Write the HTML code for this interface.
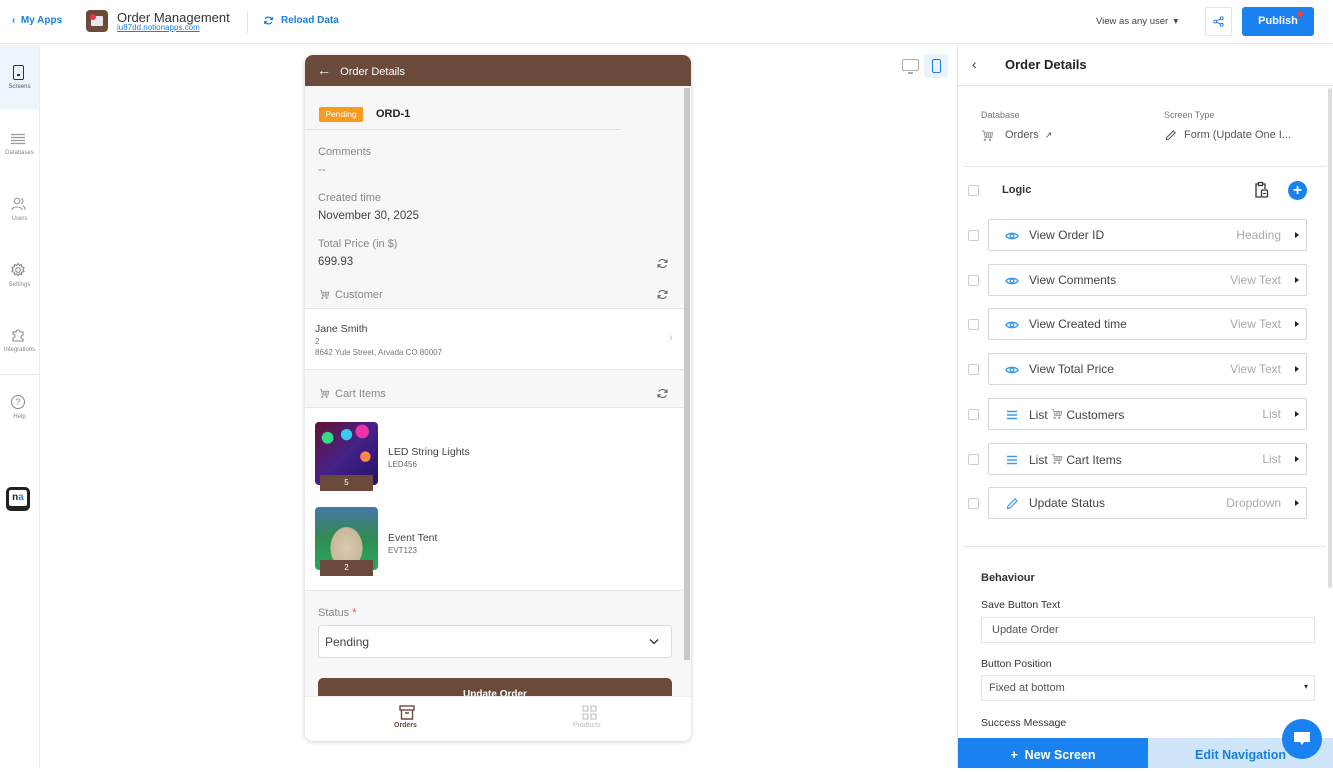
<!DOCTYPE html>
<html><head><meta charset="utf-8">
<style>
*{box-sizing:border-box;margin:0;padding:0}
body{width:1333px;height:768px;overflow:hidden;background:#fff;font-family:"Liberation Sans",sans-serif;color:#333;position:relative}
.a{position:absolute}
.t{white-space:nowrap}
.blue{color:#1a7fe0}
.side .it{position:absolute;left:0;width:39px;text-align:center;font-size:6px;color:#888}
.row{position:absolute;left:988px;width:319px;height:32px;border:1px solid #d6d6d6;border-radius:2px;background:#fff}
.row .n{position:absolute;left:40px;top:8px;font-size:12px;color:#444}
.row .k{position:absolute;right:25px;top:8px;font-size:12px;color:#aaa}
.row .ar{position:absolute;right:7px;top:12px;width:0;height:0;border-left:4px solid #222;border-top:3px solid transparent;border-bottom:3px solid transparent}
.row svg{position:absolute;left:16px;top:9px}
.cb{position:absolute;left:968px;width:11px;height:11px;border:1px solid #ccc;border-radius:2px;background:#fff}
.lbl{font-size:11px;color:#888}
.val{font-size:11.5px;color:#444}
</style></head><body>
<svg width="0" height="0" style="position:absolute">
<defs>
<symbol id="eye" viewBox="0 0 14 14"><path d="M1 7C3 3.5 11 3.5 13 7C11 10.5 3 10.5 1 7Z" fill="none" stroke="#3a9be8" stroke-width="1.4"/><circle cx="7" cy="7" r="1.8" fill="none" stroke="#3a9be8" stroke-width="1.4"/></symbol>
<symbol id="lst" viewBox="0 0 14 14"><path d="M2 3.5H12M2 7H12M2 10.5H12" stroke="#3a9be8" stroke-width="1.5"/></symbol>
<symbol id="pen" viewBox="0 0 14 14"><path d="M2.5 11.5L3 9L10 2L12 4L5 11Z" fill="none" stroke="#3a9be8" stroke-width="1.2"/></symbol>
<symbol id="ref" viewBox="0 0 14 14"><path d="M11.5 5.5A5 5 0 0 0 2.8 5M2.5 8.5A5 5 0 0 0 11.2 9" fill="none" stroke="#666" stroke-width="1.2"/><path d="M11.8 2.5V5.7H8.8M2.2 11.5V8.3H5.2" fill="none" stroke="#666" stroke-width="1.2"/></symbol>
<symbol id="cart" viewBox="0 0 14 14"><path d="M1 2H3L4.5 9H11.5L12.5 4H3.5M5 11.5A.8.8 0 1 0 5 11.6M10.5 11.5A.8.8 0 1 0 10.5 11.6M6 4.5V8.5M8 4.5V8.5M10 4.5V8.5" fill="none" stroke="#999" stroke-width="1.1"/></symbol>
</defs></svg>
<!-- top bar -->
<div class="a" style="left:0;top:0;width:1333px;height:44px;border-bottom:1px solid #e6e6e6"></div>
<div class="a t blue" style="left:12px;top:15px;font-size:10px;font-weight:bold">&#8249;&nbsp; My Apps</div>
<div class="a" style="left:86px;top:10px;width:22px;height:22px;border-radius:4px;background:#6b4a3c"><div style="margin:6px 5px;width:12px;height:10px;background:#e6e6e6;border-radius:1px"></div><div class="a" style="left:4px;top:4px;width:6px;height:6px;border-radius:50%;background:#e34"></div></div>
<div class="a t" style="left:117px;top:10px;font-size:13px;color:#333">Order Management</div>
<div class="a t blue" style="left:117px;top:23px;font-size:8px;text-decoration:underline">iu87dd.notionapps.com</div>
<div class="a" style="left:247px;top:11px;width:1px;height:22px;background:#e3e3e3"></div>
<svg class="a" style="left:263px;top:15px" width="11" height="11" viewBox="0 0 14 14"><path d="M11.5 5.5A5 5 0 0 0 2.8 5M2.5 8.5A5 5 0 0 0 11.2 9" fill="none" stroke="#1a7fe0" stroke-width="1.6"/><path d="M11.8 2.5V5.7H8.8M2.2 11.5V8.3H5.2" fill="none" stroke="#1a7fe0" stroke-width="1.6"/></svg>
<div class="a t blue" style="left:281px;top:15px;font-size:10px;font-weight:bold">Reload Data</div>
<div class="a t" style="left:1096px;top:16px;font-size:9.5px;color:#444">View as any user &nbsp;&#9662;</div>
<div class="a" style="left:1205px;top:7px;width:27px;height:29px;border:1px solid #e3e3e3;border-radius:2px"><svg style="margin:8px 7px" width="11" height="11" viewBox="0 0 12 12"><circle cx="9.5" cy="2.5" r="1.6" fill="none" stroke="#1a7fe0"/><circle cx="2.5" cy="6" r="1.6" fill="none" stroke="#1a7fe0"/><circle cx="9.5" cy="9.5" r="1.6" fill="none" stroke="#1a7fe0"/><path d="M4 5.2L8 3.2M4 6.8L8 8.8" stroke="#1a7fe0"/></svg></div>
<div class="a" style="left:1242px;top:7px;width:72px;height:29px;background:#1a82f0;border-radius:3px;color:#fff;font-size:11px;font-weight:bold;text-align:center;line-height:29px">Publish</div>
<div class="a" style="left:1297px;top:11px;width:6px;height:6px;border-radius:50%;background:#e44"></div>

<!-- sidebar -->
<div class="a side" style="left:0;top:45px;width:40px;height:723px;border-right:1px solid #eee">
 <div class="a" style="left:0;top:0;width:39px;height:65px;background:#eef5fc"></div>
 <div class="a" style="left:13px;top:20px;width:11px;height:15px;border:1.5px solid #333;border-radius:2px"><div style="margin:8px auto 0;width:3px;height:1.5px;background:#333"></div></div>
 <div class="it" style="top:39px;color:#555">Screens</div>
 <svg class="a" style="left:11px;top:88px" width="14" height="12" viewBox="0 0 14 12"><path d="M0 1.5H14M0 4.5H14M0 7.5H14M0 10.5H14" stroke="#999" stroke-width="1.2"/></svg>
 <div class="it" style="top:105px">Databases</div>
 <svg class="a" style="left:11px;top:152px" width="15" height="14" viewBox="0 0 15 14"><circle cx="6" cy="4" r="2.8" fill="none" stroke="#999" stroke-width="1.1"/><path d="M1 13C1 9 11 9 11 13M10 1.5A2.6 2.6 0 0 1 10 6.5M12 9C14 10 14 11 14 13" fill="none" stroke="#999" stroke-width="1.1"/></svg>
 <div class="it" style="top:171px">Users</div>
 <svg class="a" style="left:10px;top:217px" width="16" height="16" viewBox="0 0 16 16"><circle cx="8" cy="8" r="2.3" fill="none" stroke="#888" stroke-width="1.1"/><path d="M8 1.5L9.3 3.3L11.5 2.6L11.8 4.8L14 5.5L12.9 7.5L14 9.5L11.8 10.3L11.5 12.5L9.3 11.8L8 13.8L6.7 11.8L4.5 12.5L4.2 10.3L2 9.5L3.1 7.5L2 5.5L4.2 4.8L4.5 2.6L6.7 3.3Z" fill="none" stroke="#888" stroke-width="1.1"/></svg>
 <div class="it" style="top:237px">Settings</div>
 <svg class="a" style="left:10px;top:282px" width="16" height="16" viewBox="0 0 16 16"><path d="M3 5H6A2 2 0 1 1 10 5H13V8A2 2 0 1 0 13 12V14H3V11A2 2 0 1 0 3 7Z" fill="none" stroke="#888" stroke-width="1.1"/></svg>
 <div class="it" style="top:302px">Integrations</div>
 <div class="a" style="left:0;top:329px;width:39px;height:1px;background:#e6e6e6"></div>
 <div class="a" style="left:11px;top:350px;width:14px;height:14px;border:1.3px solid #888;border-radius:50%;font-size:9px;text-align:center;line-height:12px;color:#888">?</div>
 <div class="it" style="top:369px">Help</div>
 <div class="a" style="left:6px;top:442px;width:24px;height:24px;border-radius:5px;background:#222;padding:3px"><div style="background:#fff;width:18px;height:16px;border-radius:2px;font-size:10px;font-weight:bold;line-height:16px;text-align:center;color:#222">n<span style="color:#1a82f0">a</span></div></div>
</div>

<!-- device toggle -->
<div class="a" style="left:902px;top:59px;width:17px;height:12px;border:1.3px solid #aaa;border-radius:2px"></div>
<div class="a" style="left:908px;top:72px;width:5px;height:2px;background:#aaa"></div>
<div class="a" style="left:924px;top:54px;width:24px;height:24px;background:#eaf3fc;border-radius:3px"><div style="margin:5px 8px;width:9px;height:14px;border:1.3px solid #1a7fe0;border-radius:2px"></div></div>

<!-- phone -->
<div class="a" style="left:305px;top:55px;width:386px;height:686px;border-radius:8px;background:#f7f7f7;box-shadow:0 1px 5px rgba(0,0,0,.2);overflow:hidden">
 <div class="a" style="left:0;top:0;width:386px;height:31px;background:#6b4a3c;color:#fff;font-size:11px;line-height:31px;padding-left:12px"><span style="font-size:14px">&#8592;</span>&nbsp;&nbsp; Order Details</div>
 <div class="a" style="left:379px;top:33px;width:6px;height:572px;background:#c8c8c8"></div>
 <div class="a" style="left:14px;top:52px;width:44px;height:15px;background:#f79a1e;border-radius:2px;color:#fff;font-size:8.5px;text-align:center;line-height:15px">Pending</div>
 <div class="a t" style="left:71px;top:53px;font-size:11px;font-weight:bold;color:#222">ORD-1</div>
 <div class="a" style="left:0;top:74px;width:316px;height:1px;background:#e3e3e3"></div>
 <div class="a t lbl" style="left:13px;top:91px">Comments</div>
 <div class="a t val" style="left:13px;top:109px;color:#888">--</div>
 <div class="a t lbl" style="left:13px;top:137px">Created time</div>
 <div class="a t val" style="left:13px;top:155px">November 30, 2025</div>
 <div class="a t lbl" style="left:13px;top:183px">Total Price (in $)</div>
 <div class="a t val" style="left:13px;top:201px">699.93</div>
 <svg class="a" style="left:351px;top:202px" width="13" height="13"><use href="#ref"/></svg>
 <svg class="a" style="left:14px;top:234px" width="11" height="11"><use href="#cart"/></svg>
 <div class="a t lbl" style="left:30px;top:234px">Customer</div>
 <svg class="a" style="left:351px;top:233px" width="13" height="13"><use href="#ref"/></svg>
 <div class="a" style="left:0;top:253px;width:379px;height:62px;background:#fff;border-top:1px solid #e6e6e6;border-bottom:1px solid #e6e6e6">
  <div class="a t" style="left:10px;top:14px;font-size:10.5px;color:#444">Jane Smith</div>
  <div class="a t" style="left:10px;top:28px;font-size:8px;color:#777">2</div>
  <div class="a t" style="left:10px;top:39px;font-size:8px;color:#777">8642 Yule Street, Arvada CO 80007</div>
  <div class="a" style="left:364px;top:23px;font-size:11px;color:#bbb">&#8250;</div>
 </div>
 <svg class="a" style="left:14px;top:333px" width="11" height="11"><use href="#cart"/></svg>
 <div class="a t lbl" style="left:30px;top:333px">Cart Items</div>
 <svg class="a" style="left:351px;top:332px" width="13" height="13"><use href="#ref"/></svg>
 <div class="a" style="left:0;top:352px;width:379px;height:184px;background:#fff;border-top:1px solid #e6e6e6;border-bottom:1px solid #e6e6e6">
  <div class="a" style="left:10px;top:14px;width:63px;height:63px;border-radius:4px;background:radial-gradient(circle at 20% 25%,#3d8 0,#3d8 8%,transparent 9%),radial-gradient(circle at 50% 20%,#3ce 0,#3ce 9%,transparent 10%),radial-gradient(circle at 75% 15%,#e3a 0,#e3a 9%,transparent 10%),radial-gradient(circle at 80% 55%,#f84 0,#f84 8%,transparent 9%),linear-gradient(135deg,#613 0,#428 50%,#216 100%)"></div>
  <div class="a" style="left:15px;top:67px;width:53px;height:16px;background:#6b4a3c;color:#fff;font-size:8px;text-align:center;line-height:16px">5</div>
  <div class="a t" style="left:83px;top:38px;font-size:10.5px;color:#444">LED String Lights</div>
  <div class="a t" style="left:83px;top:52px;font-size:8px;color:#666">LED456</div>
  <div class="a" style="left:10px;top:99px;width:63px;height:63px;border-radius:4px;background:radial-gradient(ellipse at 50% 65%,#d8c9b0 0,#c9b89a 35%,transparent 37%),linear-gradient(180deg,#47a 0,#385 45%,#2a5 100%)"></div>
  <div class="a" style="left:15px;top:152px;width:53px;height:16px;background:#6b4a3c;color:#fff;font-size:8px;text-align:center;line-height:16px">2</div>
  <div class="a t" style="left:83px;top:124px;font-size:10.5px;color:#444">Event Tent</div>
  <div class="a t" style="left:83px;top:138px;font-size:8px;color:#666">EVT123</div>
 </div>
 <div class="a t lbl" style="left:13px;top:552px">Status <span style="color:#e55">*</span></div>
 <div class="a" style="left:13px;top:570px;width:354px;height:33px;border:1px solid #ddd;border-radius:4px;background:#fff;font-size:12px;color:#444;padding:9px 0 0 6px">Pending<svg class="a" style="right:12px;top:12px" width="10" height="7" viewBox="0 0 10 7"><path d="M1 1.5L5 5.5L9 1.5" fill="none" stroke="#333" stroke-width="1.3"/></svg></div>
 <div class="a" style="left:13px;top:623px;width:354px;height:24px;background:#6b4a3c;border-radius:5px;color:#fff;font-size:10px;font-weight:bold;text-align:center;padding-top:11px">Update Order</div>
 <div class="a" style="left:0;top:641px;width:386px;height:45px;background:#fff;border-top:1px solid #eee">
  <svg class="a" style="left:94px;top:8px" width="16" height="15" viewBox="0 0 16 15"><rect x="1" y="1" width="14" height="4" fill="none" stroke="#6b4a3c" stroke-width="1.4"/><path d="M2.5 5V14H13.5V5M6 8H10" fill="none" stroke="#6b4a3c" stroke-width="1.4"/></svg>
  <div class="a t" style="left:89px;top:25px;font-size:7px;color:#6b4a3c;font-weight:bold">Orders</div>
  <svg class="a" style="left:277px;top:8px" width="15" height="15" viewBox="0 0 15 15"><rect x="1" y="1" width="5" height="5" fill="none" stroke="#bbb"/><rect x="9" y="1" width="5" height="5" fill="none" stroke="#bbb"/><rect x="1" y="9" width="5" height="5" fill="none" stroke="#bbb"/><rect x="9" y="9" width="5" height="5" fill="none" stroke="#bbb"/></svg>
  <div class="a t" style="left:268px;top:25px;font-size:7px;color:#bbb">Products</div>
 </div>
</div>

<!-- right panel -->
<div class="a" style="left:957px;top:45px;width:376px;height:723px;border-left:1px solid #e6e6e6"></div>
<div class="a" style="left:1328px;top:88px;width:4px;height:500px;background:#ddd;border-radius:2px"></div>
<div class="a t" style="left:972px;top:56px;font-size:14px;color:#333">&#8249;</div>
<div class="a t" style="left:1005px;top:57px;font-size:13px;font-weight:bold;color:#222">Order Details</div>
<div class="a" style="left:958px;top:85px;width:375px;height:1px;background:#e6e6e6"></div>
<div class="a t" style="left:981px;top:110px;font-size:9px;color:#777">Database</div>
<svg class="a" style="left:981px;top:129px" width="13" height="13"><use href="#cart"/></svg>
<div class="a t" style="left:1005px;top:129px;font-size:11px;color:#555">Orders &nbsp;<span style="font-size:9px">&#x2197;</span></div>
<div class="a t" style="left:1164px;top:110px;font-size:9px;color:#777">Screen Type</div>
<svg class="a" style="left:1164px;top:129px" width="13" height="13" viewBox="0 0 14 14"><path d="M2.5 11.5L3 9L10 2L12 4L5 11Z" fill="none" stroke="#555" stroke-width="1.1"/></svg>
<div class="a t" style="left:1184px;top:129px;font-size:11px;color:#555">Form (Update One I...</div>
<div class="a" style="left:964px;top:166px;width:362px;height:1px;background:#e6e6e6"></div>
<div class="cb" style="top:185px"></div>
<div class="a t" style="left:1002px;top:184px;font-size:11px;font-weight:bold;color:#333">Logic</div>
<svg class="a" style="left:1254px;top:181px" width="15" height="18" viewBox="0 0 15 18"><path d="M4 3H2V16H7M9 3H11V8" fill="none" stroke="#333" stroke-width="1.3"/><rect x="4.5" y="1.5" width="4" height="3" fill="none" stroke="#333" stroke-width="1.2"/><rect x="7.5" y="9" width="6" height="7" rx="1" fill="none" stroke="#333" stroke-width="1.3"/><path d="M9 12.5H12" stroke="#333"/></svg>
<div class="a" style="left:1288px;top:181px;width:19px;height:19px;border-radius:50%;background:#1a82f0;color:#fff;text-align:center;font-size:16px;line-height:19px;font-weight:bold">+</div>

<div class="cb" style="top:230px"></div>
<div class="row" style="top:219px"><svg width="14" height="14"><use href="#eye"/></svg><span class="n">View Order ID</span><span class="k">Heading</span><span class="ar"></span></div>
<div class="cb" style="top:275px"></div>
<div class="row" style="top:264px"><svg width="14" height="14"><use href="#eye"/></svg><span class="n">View Comments</span><span class="k">View Text</span><span class="ar"></span></div>
<div class="cb" style="top:319px"></div>
<div class="row" style="top:308px"><svg width="14" height="14"><use href="#eye"/></svg><span class="n">View Created time</span><span class="k">View Text</span><span class="ar"></span></div>
<div class="cb" style="top:364px"></div>
<div class="row" style="top:353px"><svg width="14" height="14"><use href="#eye"/></svg><span class="n">View Total Price</span><span class="k">View Text</span><span class="ar"></span></div>
<div class="cb" style="top:409px"></div>
<div class="row" style="top:398px"><svg width="14" height="14"><use href="#lst"/></svg><span class="n">List <svg style="position:relative;left:0;top:1px" width="12" height="12"><use href="#cart"/></svg> Customers</span><span class="k">List</span><span class="ar"></span></div>
<div class="cb" style="top:454px"></div>
<div class="row" style="top:443px"><svg width="14" height="14"><use href="#lst"/></svg><span class="n">List <svg style="position:relative;left:0;top:1px" width="12" height="12"><use href="#cart"/></svg> Cart Items</span><span class="k">List</span><span class="ar"></span></div>
<div class="cb" style="top:498px"></div>
<div class="row" style="top:487px"><svg width="14" height="14"><use href="#pen"/></svg><span class="n">Update Status</span><span class="k">Dropdown</span><span class="ar"></span></div>

<div class="a" style="left:964px;top:546px;width:362px;height:1px;background:#e6e6e6"></div>
<div class="a t" style="left:981px;top:572px;font-size:11px;font-weight:bold;color:#333">Behaviour</div>
<div class="a t" style="left:981px;top:599px;font-size:10.5px;color:#333">Save Button Text</div>
<div class="a" style="left:981px;top:617px;width:334px;height:26px;border:1px solid #e3e3e3;border-radius:2px;font-size:11px;color:#555;padding:6px 0 0 10px">Update Order</div>
<div class="a t" style="left:981px;top:658px;font-size:10.5px;color:#333">Button Position</div>
<div class="a" style="left:981px;top:675px;width:334px;height:26px;border:1px solid #e3e3e3;border-radius:2px;font-size:11px;color:#555;padding:6px 0 0 7px">Fixed at bottom<span class="a" style="right:6px;top:6px;font-size:8px;color:#333">&#9662;</span></div>
<div class="a t" style="left:981px;top:717px;font-size:10.5px;color:#333">Success Message</div>
<div class="a" style="left:958px;top:738px;width:190px;height:30px;background:#1a82f0;color:#fff;font-size:12.5px;font-weight:bold;text-align:center;line-height:34px">+&nbsp; New Screen</div>
<div class="a" style="left:1148px;top:738px;width:185px;height:30px;background:#cfe5f9;color:#1a7fe0;font-size:12.5px;font-weight:bold;line-height:34px;padding-left:47px">Edit Navigation</div>
<div class="a" style="left:1282px;top:719px;width:40px;height:40px;border-radius:50%;background:#1a82f0"><svg style="margin:12px 0 0 11px" width="18" height="16" viewBox="0 0 18 16"><path d="M1 1H17V11H11L9 14L7 11H1Z" fill="#fff"/></svg></div>
</body></html>
